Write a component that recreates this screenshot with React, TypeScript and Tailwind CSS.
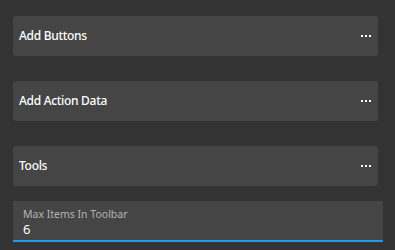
import React from 'react';

const sections = ['Add Buttons', 'Add Action Data', 'Tools'];

const Dots: React.FC = () => (
  <div className="flex gap-[2px]">
    <span className="w-[2px] h-[2px] bg-white" />
    <span className="w-[2px] h-[2px] bg-white" />
    <span className="w-[2px] h-[2px] bg-white" />
  </div>
);

const App: React.FC = () => {
  return (
    <div
      className="w-[395px] h-[250px] bg-[#333333] pt-4 pl-[13px] pr-[12px] flex flex-col"
      style={{ fontFamily: '"Noto Sans", "Open Sans", sans-serif' }}
    >
      {sections.map((title, i) => (
        <div
          key={title}
          className={`h-10 mr-[5px] rounded-[3px] bg-[#454545] flex items-center justify-between pl-[6px] pr-[7px] ${
            i < sections.length - 1 ? 'mb-[25px]' : 'mb-[15px]'
          }`}
        >
          <span className="text-[12px] font-medium tracking-[-0.3px] text-white leading-none">{title}</span>
          <Dots />
        </div>
      ))}

      {/* Number field */}
      <div className="h-[41px] bg-[#454545] border-b-2 border-[#1e9be9] pl-[10px] pt-[6px] flex flex-col">
        <span className="text-[10.5px] text-[#b4b4b4] leading-[14px]">Max Items In Toolbar</span>
        <span className="text-[13px] text-white leading-[16px]">6</span>
      </div>
    </div>
  );
};

export default App;
